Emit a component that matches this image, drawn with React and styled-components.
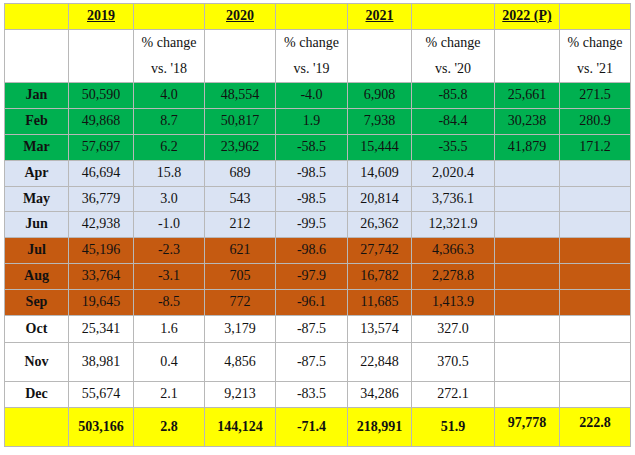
import styled, { createGlobalStyle } from 'styled-components';

const GlobalStyle = createGlobalStyle`
	html, body {
		margin: 0;
		padding: 0;
		background: #ffffff;
	}
	body {
		font-family: "Liberation Serif", "Times New Roman", serif;
		color: #111;
	}
`;

const Page = styled.div`
	padding: 3px 4px;
`;

const Table = styled.table`
	border-collapse: collapse;
	table-layout: fixed;
	width: 627px;
	font-size: 14px;
	border: 1px solid #b8b8b8;
`;

const fills = {
	yellow: '#ffff00',
	white: '#ffffff',
	green: '#00b050',
	blue: '#dae3f3',
	orange: '#c55a11',
};

const Row = styled.tr`
	height: ${(p) => p.$h}px;
	background: ${(p) => fills[p.$fill]};
`;

const Cell = styled.td`
	border: 1px solid #b8b8b8;
	text-align: center;
	vertical-align: ${(p) => (p.$top ? 'top' : 'middle')};
	padding: ${(p) => (p.$top ? '7px 0 0' : '0')};
	font-weight: ${(p) => (p.$bold ? 700 : 400)};
	line-height: 1.15;
	white-space: nowrap;
`;

const Year = styled.span`
	font-weight: 700;
	text-decoration: underline;
`;

const Change = styled.div`
	line-height: 26px;
`;

const widths = [64, 65, 71, 71, 72, 64, 83, 65, 71];

const months = [
	['Jan', '50,590', '4.0', '48,554', '-4.0', '6,908', '-85.8', '25,661', '271.5', 'green', 26],
	['Feb', '49,868', '8.7', '50,817', '1.9', '7,938', '-84.4', '30,238', '280.9', 'green', 26],
	['Mar', '57,697', '6.2', '23,962', '-58.5', '15,444', '-35.5', '41,879', '171.2', 'green', 26],
	['Apr', '46,694', '15.8', '689', '-98.5', '14,609', '2,020.4', '', '', 'blue', 26],
	['May', '36,779', '3.0', '543', '-98.5', '20,814', '3,736.1', '', '', 'blue', 25],
	['Jun', '42,938', '-1.0', '212', '-99.5', '26,362', '12,321.9', '', '', 'blue', 26],
	['Jul', '45,196', '-2.3', '621', '-98.6', '27,742', '4,366.3', '', '', 'orange', 26],
	['Aug', '33,764', '-3.1', '705', '-97.9', '16,782', '2,278.8', '', '', 'orange', 26],
	['Sep', '19,645', '-8.5', '772', '-96.1', '11,685', '1,413.9', '', '', 'orange', 26],
	['Oct', '25,341', '1.6', '3,179', '-87.5', '13,574', '327.0', '', '', 'white', 27],
	['Nov', '38,981', '0.4', '4,856', '-87.5', '22,848', '370.5', '', '', 'white', 39],
	['Dec', '55,674', '2.1', '9,213', '-83.5', '34,286', '272.1', '', '', 'white', 26],
];

const years = ['2019', '2020', '2021', '2022 (P)'];
const prior = ["'18", "'19", "'20", "'21"];

export default function App() {
	return (
		<Page>
			<GlobalStyle />
			<Table>
				<colgroup>
					{widths.map((w, i) => <col key={i} style={{ width: w }} />)}
				</colgroup>
				<tbody>
					<Row $h={26} $fill="yellow">
						<Cell />
						{years.map((y) => [
							<Cell key={y}><Year>{y}</Year></Cell>,
							<Cell key={y + 'c'} />,
						])}
					</Row>
					<Row $h={52} $fill="white">
						<Cell />
						{prior.map((p) => [
							<Cell key={p} />,
							<Cell key={p + 'c'}>
								<Change>% change</Change>
								<Change>vs. {p}</Change>
							</Cell>,
						])}
					</Row>
					{months.map((m) => (
						<Row key={m[0]} $h={m[10]} $fill={m[9]}>
							<Cell $bold>{m[0]}</Cell>
							{m.slice(1, 9).map((v, i) => <Cell key={i}>{v}</Cell>)}
						</Row>
					))}
					<Row $h={39} $fill="yellow">
						<Cell />
						<Cell $bold>503,166</Cell>
						<Cell $bold>2.8</Cell>
						<Cell $bold>144,124</Cell>
						<Cell $bold>-71.4</Cell>
						<Cell $bold>218,991</Cell>
						<Cell $bold>51.9</Cell>
						<Cell $bold $top>97,778</Cell>
						<Cell $bold $top>222.8</Cell>
					</Row>
				</tbody>
			</Table>
		</Page>
	);
}
